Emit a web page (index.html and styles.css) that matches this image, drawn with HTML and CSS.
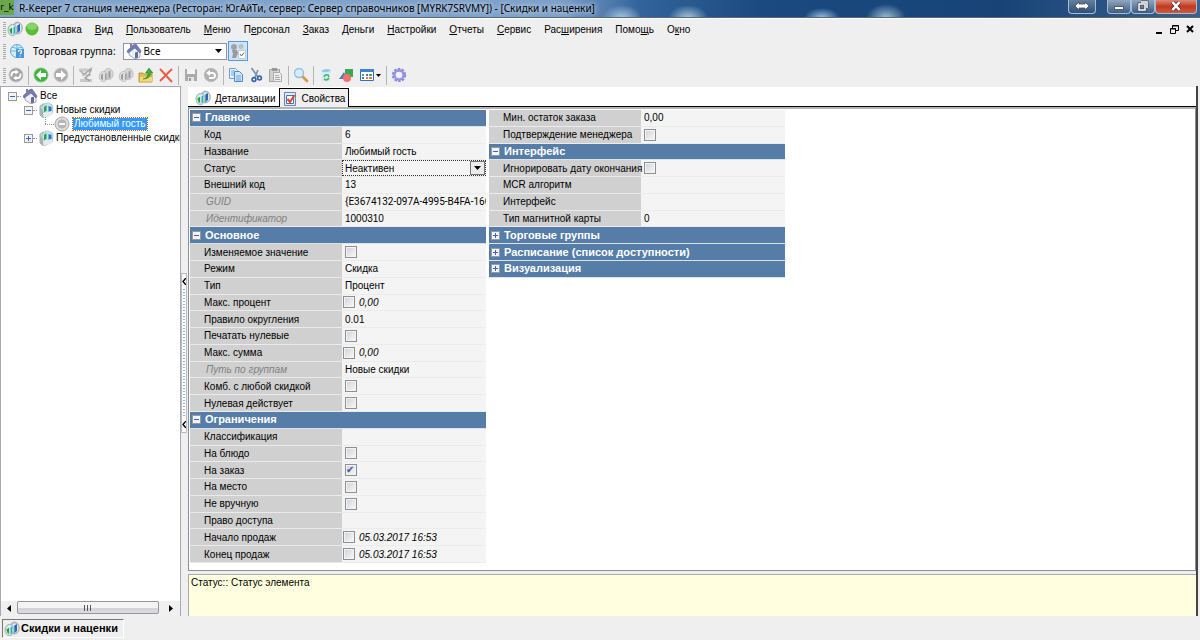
FILE: index.html
```
<!DOCTYPE html>
<html lang="ru">
<head>
<meta charset="utf-8">
<title>R-Keeper 7 станция менеджера</title>
<link rel="stylesheet" href="styles.css">
</head>
<body>
<svg class="defs" aria-hidden="true">
  <symbol id="coins" viewBox="0 0 16 16"><ellipse cx="10.500" cy="7" rx="4.800" ry="6" fill="#b9c4cc" stroke="#8f9aa5" stroke-width=".7"/><ellipse cx="11" cy="7" rx="3.300" ry="4.600" fill="#dcebf5"/><path d="M10.300 4.500l2.700-1.500v7l-2.700 2z" fill="#2468b6"/><ellipse cx="5.500" cy="9" rx="4.600" ry="5.700" fill="#c6d2d2" stroke="#95a3a3" stroke-width=".7"/><ellipse cx="5.800" cy="9" rx="3.400" ry="4.600" fill="#dff3ee"/><path d="M2.500 8.500l2.600-2v6.500L3.500 12z" fill="#1ea53a"/><path d="M6.500 6.500l1.900-1.500v7l-1.900 1.500z" fill="#2fa9c4"/></symbol>
  <symbol id="graycoins" viewBox="0 0 16 16"><ellipse cx="10.500" cy="7" rx="4.600" ry="5.500" fill="#d9d9d9" stroke="#b5b5b5" stroke-width=".8"/><path d="M10.500 4.500l2-1v7l-2 1z" fill="#9c9c9c"/><ellipse cx="5.500" cy="9.500" rx="4.300" ry="5" fill="#dedede" stroke="#b5b5b5" stroke-width=".8"/><path d="M3 8l2-1.500V13l-2-1zM7 7l1.500-1v6L7 13z" fill="#9c9c9c"/></symbol>
  <symbol id="house" viewBox="0 0 16 16"><path d="M3 8l5-5 6 6v5l-5 2-6-4z" fill="#eceff6" stroke="#9296ac" stroke-width=".8"/><path d="M1 8l6-6 3-1 5 7-1 2-5-5-7 5z" fill="#737bb4" stroke="#555d91" stroke-width=".6"/><path d="M9 9.500l3-1v6l-3 1z" fill="#666b92"/><path d="M4 1h2v3L4 6z" fill="#7a80a8"/></symbol>
  <symbol id="folder" viewBox="0 0 16 16"><path d="M2 4l3-2 9 1v9l-8 4-4-3z" fill="#cdd6da" stroke="#929b9f" stroke-width=".8"/><circle cx="9.500" cy="6.500" r="5.500" fill="#c4e4ee" stroke="#8ba9b5" stroke-width=".5"/><path d="M6 5l2.500-2v6L6 10z" fill="#23a348"/><path d="M10.500 4l3 1v4l-3 1z" fill="#2878bc"/><path d="M2 5l3 4v7l-3-3z" fill="#aab3b8"/><path d="M5 11l9-2v4l-8 3z" fill="#e6eaeb"/></symbol>
  <symbol id="arrow" viewBox="0 0 16 16"><path d="M8 3L3 8l5 5v-3h5V6H8z" fill="#fff"/></symbol>
</svg>

<header class="titlebar">
  <span class="logo">r_k</span>
  <h1>R-Keeper 7 станция менеджера (Ресторан: ЮгАйТи, сервер: Сервер справочников [MYRK7SRVMY]) - [Скидки и наценки]</h1>
  <div class="winbtns">
    <button class="wb swap" aria-label="Переключить"><svg width="16" height="10" viewBox="0 0 16 10"><path d="M1 5l4-4v2h6V1l4 4-4 4V7H5v2z" fill="#fff" stroke="#445" stroke-width=".8"/></svg></button>
    <div class="group">
      <button class="wb" aria-label="Свернуть"><svg width="12" height="10" viewBox="0 0 12 10"><path d="M1.500 5.500h9v3h-9z" fill="#fff" stroke="#556"/></svg></button>
      <button class="wb" aria-label="Развернуть"><svg width="12" height="12" viewBox="0 0 12 12"><path d="M4 2h6v6M2 4h6v6H2z" fill="none" stroke="#445" stroke-width="3"/><path d="M4 2h6v6M2 4h6v6H2z" fill="none" stroke="#fff" stroke-width="1.500"/></svg></button>
      <button class="wb close" aria-label="Закрыть"><svg width="12" height="10" viewBox="0 0 12 10"><path d="M2.500 1l7 8M9.500 1l-7 8" stroke="#534" stroke-width="4"/><path d="M2.500 1l7 8M9.500 1l-7 8" stroke="#fff" stroke-width="2.500"/></svg></button>
    </div>
  </div>
</header>

<nav class="menubar">
  <i class="grip"></i>
  <svg class="ico"><use href="#coins"/></svg>
  <svg class="ico" viewBox="0 0 16 16"><circle cx="8" cy="8" r="6.500" fill="#59bd37"/><ellipse cx="8" cy="5.500" rx="5" ry="3.500" fill="#86d468"/></svg>
  <div class="menus">
    <button><u>П</u>равка</button><button><u>В</u>ид</button><button><u>П</u>ользователь</button><button><u>М</u>еню</button><button>П<u>е</u>рсонал</button><button><u>З</u>аказ</button><button><u>Д</u>еньги</button><button><u>Н</u>астройки</button><button><u>О</u>тчеты</button><button><u>С</u>ервис</button><button>Рас<u>ш</u>ирения</button><button>Помо<u>щ</u>ь</button><button>О<u>к</u>но</button>
  </div>
  <div class="mdi">
    <button aria-label="Свернуть окно"><svg width="8" height="9" viewBox="0 0 8 9"><path d="M1 7h6v2H1z"/></svg></button>
    <button aria-label="Восстановить окно"><svg width="9" height="9" viewBox="0 0 9 9"><path d="M2.500 3V.500h6v5H6M2 1h7M.500 3.500h5v5h-5zM0 4h6" fill="none" stroke="#000"/></svg></button>
    <button aria-label="Закрыть окно"><svg width="8" height="8" viewBox="0 0 8 8"><path d="M1 1l6 6M7 1L1 7" stroke="#000" stroke-width="2"/></svg></button>
  </div>
</nav>

<div class="tradebar">
  <i class="grip"></i>
  <svg class="ico" viewBox="0 0 16 16"><circle cx="8" cy="8" r="6.500" fill="#d5edf9" stroke="#5ba7dd"/><path d="M8 1v14M1 8h14M3 4q5 3 10 0" fill="none" stroke="#6db5e2"/><path d="M7 6h8v9H7z" fill="#4a98d7"/><path d="M9.500 9q0-2 1.500-2t1.500 1.500T11 11M11 12.500v1" fill="none" stroke="#fff" stroke-width="1.200"/></svg>
  <label for="group">Торговая группа:</label>
  <div class="combo"><svg class="ico"><use href="#house"/></svg><select id="group"><option>Все</option></select><svg class="caret" width="7" height="4" viewBox="0 0 7 4"><path d="M0 0h7L3.500 4z"/></svg></div>
  <button class="toggle" aria-label="Фильтр"><svg width="16" height="16" viewBox="0 0 16 16"><circle cx="4" cy="4" r="3" fill="#9ea2a5"/><circle cx="11" cy="3.500" r="2.500" fill="#bbbfc2"/><path d="M2 7h5l1 3-2 5H2l1-4z" fill="#979b9e"/><path d="M8.500 7.500h7v8h-7z" fill="#fff" stroke="#c3c8cb"/><path d="M10 11l1.500 2L14 9.500" fill="none" stroke="#666"/></svg></button>
</div>

<div class="toolbar">
  <i class="grip"></i>
  <button aria-label="Обновить"><svg class="ico" viewBox="0 0 16 16"><circle cx="8" cy="8" r="7" fill="#a3a3a3" stroke="#c4c4c4" stroke-width=".8"/><path d="M3.500 9.500V8q0-3 3-3H8M12.500 6.500V8q0 3-3 3H8" fill="none" stroke="#fff" stroke-width="1.800"/><path d="M7.500 2.500l3.500 2.500-3.500 2.500zM8.500 8.500L5 11l3.500 2.500z" fill="#fff"/></svg></button>
  <i class="sep"></i>
  <button aria-label="Назад"><svg class="ico" viewBox="0 0 16 16"><circle cx="8" cy="8" r="7" fill="#3fb53c" stroke="#7cc47a"/><use href="#arrow"/></svg></button>
  <button aria-label="Вперёд"><svg class="ico" viewBox="0 0 16 16"><circle cx="8" cy="8" r="7" fill="#adadad" stroke="#c8c8c8"/><path d="M8 3l5 5-5 5v-3H3V6h5z" fill="#fff"/></svg></button>
  <i class="sep"></i>
  <button aria-label="Дерево"><svg class="ico" viewBox="0 0 16 16"><path d="M1 1.500h13v3H1zM4 7h9v2H4zM2 12h12v3H2z" fill="#c9c9c9"/><path d="M3 4q2 5 6 1l4-3-2 6-4 3 5 3" fill="none" stroke="#a5a5a5" stroke-width="1.500"/></svg></button>
  <button aria-label="Элемент"><svg class="ico"><use href="#graycoins"/></svg></button>
  <button aria-label="Копия элемента"><svg class="ico"><use href="#graycoins"/></svg></button>
  <button aria-label="Вверх"><svg class="ico" viewBox="0 0 16 16"><path d="M1 6h4l1 1h8v8H1z" fill="#e4bd4e" stroke="#b38c2b" stroke-width=".8"/><path d="M2 10h12v4.500H2z" fill="#f4d97b"/><path d="M5 12q5-1 5-6H7.500L11 1l4 5h-2.500q0 6-7.500 6z" fill="#3ead3b" stroke="#277e27" stroke-width=".5"/></svg></button>
  <button aria-label="Удалить"><svg class="ico" viewBox="0 0 16 16"><path d="M2 2l12 13M14 2L2 14" stroke="#ee5941" stroke-width="1.900"/></svg></button>
  <i class="sep"></i>
  <button aria-label="Сохранить"><svg class="ico" viewBox="0 0 16 16"><path d="M2 2h11l1 1v11H2z" fill="#aaa"/><path d="M4 2h8v5H4z" fill="#f4f4f4"/><path d="M5 10h6v4H5z" fill="#e3e3e3"/><path d="M6 11h2v3H6z" fill="#999"/></svg></button>
  <button aria-label="Отменить"><svg class="ico" viewBox="0 0 16 16"><circle cx="8" cy="8" r="7" fill="#b1b1b1"/><path d="M6 6h3q3 0 3 2.500T9 11H6" fill="none" stroke="#fff" stroke-width="2"/><path d="M3 6l4-3v6z" fill="#fff"/></svg></button>
  <i class="sep"></i>
  <button aria-label="Копировать"><svg class="ico" viewBox="0 0 16 16"><path d="M1.500 1.500h6l2 2v8h-8z" fill="#e9f3fc" stroke="#6aa0d8"/><path d="M6.500 4.500h5l3 3v7h-8z" fill="#d4e7f9" stroke="#4b8cce"/><path d="M3 4h4M3 6h3M3 8h3M8 9h5M8 11h5M8 13h5" stroke="#6ba3db"/></svg></button>
  <button aria-label="Вырезать"><svg class="ico" viewBox="0 0 16 16"><path d="M3.500 1l6.500 9M10 3l-3 7" stroke="#7b93b5" stroke-width="1.700"/><circle cx="6" cy="12.500" r="1.900" fill="none" stroke="#3865aa" stroke-width="1.600"/><circle cx="11.500" cy="11" r="1.900" fill="none" stroke="#3865aa" stroke-width="1.600"/></svg></button>
  <button aria-label="Вставить"><svg class="ico" viewBox="0 0 16 16"><path d="M1.500 2.500h10v12h-10z" fill="#d0d0d0" stroke="#a2a2a2"/><path d="M4 1h5v3H4z" fill="#999"/><path d="M5.500 5.500h6l2 2v7h-8z" fill="#eee" stroke="#aaa"/><path d="M7 8.500h4M7 10.500h5M7 12.500h5" stroke="#aaa"/></svg></button>
  <i class="sep"></i>
  <button aria-label="Найти"><svg class="ico" viewBox="0 0 16 16"><path d="M9.500 9.500L14 14" stroke="#d89a45" stroke-width="2.800" stroke-linecap="round"/><circle cx="6" cy="6" r="4.500" fill="#d7ecfb" stroke="#91bde2" stroke-width="1.300"/></svg></button>
  <i class="sep"></i>
  <button aria-label="Корзина"><svg class="ico" viewBox="0 0 16 16"><path d="M3 4l10-1-1 11-8 1z" fill="#d3ecf7"/><path d="M3 4q5-3.500 10-1-4 4-10 1" fill="#8fcbec"/><path d="M6 10q1-3 4-2l1 2M11 11q-2 3-5 1" fill="none" stroke="#4bb760" stroke-width="1.600"/></svg></button>
  <button aria-label="Фигуры"><svg class="ico" viewBox="0 0 16 16"><path d="M7 2h8v8H7z" fill="#39a852"/><path d="M1 12L6 5l3 7z" fill="#4d78bb"/><circle cx="9" cy="11" r="4" fill="#f47168"/></svg></button>
  <button class="wide" aria-label="Вид"><svg class="ico" viewBox="0 0 16 16"><path d="M1.500 2.500h13v11h-13z" fill="#fff" stroke="#2f70c4"/><path d="M1 2h14v3H1z" fill="#3c83d7"/><path d="M3 7h2v2H3zM10 7h3v2h-3z" fill="#4fa84e"/><path d="M7 7h2v2H7zM3 10h2v2H3z" fill="#4675bf"/><path d="M7 10h2v2H7zM10 10h3v2h-3z" fill="#e17c4b"/></svg><svg width="5" height="3" viewBox="0 0 5 3"><path d="M0 0h5L2.500 3z"/></svg></button>
  <i class="sep"></i>
  <button aria-label="Настройки"><svg class="ico" viewBox="0 0 16 16"><circle cx="8" cy="8" r="6" fill="none" stroke="#8587d8" stroke-width="2.200" stroke-dasharray="2.500 1.270"/><circle cx="8" cy="8" r="4.500" fill="#f2f2fb" stroke="#9395e4" stroke-width="2.400"/></svg></button>
</div>

<main class="work">
  <aside class="side">
    <ul class="tree">
      <li><i class="pm minus"></i><i class="dots"></i><svg class="ico"><use href="#house"/></svg><span>Все</span></li>
      <li class="l2"><i class="pm minus"></i><i class="dots"></i><svg class="ico"><use href="#folder"/></svg><span>Новые скидки</span></li>
      <li class="l3"><i class="elbow"></i><svg class="ico" viewBox="0 0 16 16"><circle cx="8" cy="8" r="7" fill="#ddd" stroke="#aaa"/><circle cx="8" cy="8" r="4.500" fill="#b5b5b5"/><path d="M5 8h6" stroke="#fff" stroke-width="1.800"/></svg><span class="sel">Любимый гость</span></li>
      <li class="l2"><i class="pm plus"></i><i class="dots"></i><svg class="ico"><use href="#folder"/></svg><span>Предустановленные скидки</span></li>
    </ul>
    <div class="scroll">
      <button aria-label="Влево"><svg width="4" height="7" viewBox="0 0 4 7"><path d="M4 0v7L0 3.500z"/></svg></button>
      <div class="thumb"><i></i><i></i><i></i></div>
      <button aria-label="Вправо"><svg width="4" height="7" viewBox="0 0 4 7"><path d="M0 0v7l4-3.500z"/></svg></button>
    </div>
  </aside>
  <div class="split"><button class="handle" aria-label="Свернуть панель"><svg width="4" height="7" viewBox="0 0 4 7"><path d="M4 0L1 3.500 4 7" fill="none" stroke="#000" stroke-width="1.400"/></svg><i></i><svg width="4" height="7" viewBox="0 0 4 7"><path d="M4 0L1 3.500 4 7" fill="none" stroke="#000" stroke-width="1.400"/></svg></button></div>
  <section class="content">
    <div class="tabs">
      <button class="tab"><svg class="ico"><use href="#coins"/></svg>Детализации</button>
      <button class="tab active"><svg class="ico" viewBox="0 0 16 16"><path d="M2.500 1.500h11v13h-11z" fill="#e3edf9" stroke="#6386bb"/><path d="M4.500 4.500h7v8h-7z" fill="#fff" stroke="#4571b1"/><path d="M5.500 8l2.500 3L12.500 4" fill="none" stroke="#e24625" stroke-width="2"/></svg>Свойства</button>
    </div>
    <div class="props">
      <div class="col">
        <button class="head"><i class="pm minus"></i>Главное</button>
        <div class="row"><label for="p1">Код</label><div class="val"><input id="p1" type="text" value="6"></div></div>
        <div class="row"><label for="p2">Название</label><div class="val"><input id="p2" type="text" value="Любимый гость"></div></div>
        <div class="row"><label for="p3">Статус</label><div class="val status"><select id="p3"><option>Неактивен</option></select><span class="drop"><svg width="7" height="4" viewBox="0 0 7 4"><path d="M0 0h7L3.500 4z"/></svg></span></div></div>
        <div class="row"><label for="p4">Внешний код</label><div class="val"><input id="p4" type="text" value="13"></div></div>
        <div class="row ro"><label for="p5">GUID</label><div class="val"><input id="p5" class="guid" type="text" readonly value="{E3674132-097A-4995-B4FA-16C"></div></div>
        <div class="row ro"><label for="p6">Идентификатор</label><div class="val"><input id="p6" type="text" readonly value="1000310"></div></div>
        <button class="head"><i class="pm minus"></i>Основное</button>
        <div class="row"><label for="p7">Изменяемое значение</label><div class="val"><input id="p7" type="checkbox"></div></div>
        <div class="row"><label for="p8">Режим</label><div class="val"><input id="p8" type="text" value="Скидка"></div></div>
        <div class="row"><label for="p9">Тип</label><div class="val"><input id="p9" type="text" value="Процент"></div></div>
        <div class="row"><label for="p10">Макс. процент</label><div class="val opt"><input id="p10" type="checkbox"><input type="text" aria-label="Макс. процент, значение" value="0,00"></div></div>
        <div class="row"><label for="p11">Правило округления</label><div class="val"><input id="p11" type="text" value="0.01"></div></div>
        <div class="row"><label for="p12">Печатать нулевые</label><div class="val"><input id="p12" type="checkbox"></div></div>
        <div class="row"><label for="p13">Макс. сумма</label><div class="val opt"><input id="p13" type="checkbox"><input type="text" aria-label="Макс. сумма, значение" value="0,00"></div></div>
        <div class="row ro"><label for="p14">Путь по группам</label><div class="val"><input id="p14" type="text" readonly value="Новые скидки"></div></div>
        <div class="row"><label for="p15">Комб. с любой скидкой</label><div class="val"><input id="p15" type="checkbox"></div></div>
        <div class="row"><label for="p16">Нулевая действует</label><div class="val"><input id="p16" type="checkbox"></div></div>
        <button class="head"><i class="pm minus"></i>Ограничения</button>
        <div class="row"><label for="p17">Классификация</label><div class="val"><input id="p17" type="text"></div></div>
        <div class="row"><label for="p18">На блюдо</label><div class="val"><input id="p18" type="checkbox"></div></div>
        <div class="row"><label for="p19">На заказ</label><div class="val"><input id="p19" type="checkbox" checked></div></div>
        <div class="row"><label for="p20">На место</label><div class="val"><input id="p20" type="checkbox"></div></div>
        <div class="row"><label for="p21">Не вручную</label><div class="val"><input id="p21" type="checkbox"></div></div>
        <div class="row"><label for="p22">Право доступа</label><div class="val"><input id="p22" type="text"></div></div>
        <div class="row"><label for="p23">Начало продаж</label><div class="val opt"><input id="p23" type="checkbox"><input type="text" aria-label="Начало продаж, дата" value="05.03.2017 16:53"></div></div>
        <div class="row"><label for="p24">Конец продаж</label><div class="val opt"><input id="p24" type="checkbox"><input type="text" aria-label="Конец продаж, дата" value="05.03.2017 16:53"></div></div>
      </div>
      <div class="col">
        <div class="row"><label for="q1">Мин. остаток заказа</label><div class="val"><input id="q1" type="text" value="0,00"></div></div>
        <div class="row"><label for="q2">Подтверждение менеджера</label><div class="val"><input id="q2" type="checkbox"></div></div>
        <button class="head"><i class="pm minus"></i>Интерфейс</button>
        <div class="row"><label for="q3">Игнорировать дату окончания</label><div class="val"><input id="q3" type="checkbox"></div></div>
        <div class="row"><label for="q4">MCR алгоритм</label><div class="val"><input id="q4" type="text"></div></div>
        <div class="row"><label for="q5">Интерфейс</label><div class="val"><input id="q5" type="text"></div></div>
        <div class="row"><label for="q6">Тип магнитной карты</label><div class="val"><input id="q6" type="text" value="0"></div></div>
        <button class="head"><i class="pm plus"></i>Торговые группы</button>
        <button class="head"><i class="pm plus"></i>Расписание (список доступности)</button>
        <button class="head"><i class="pm plus"></i>Визуализация</button>
      </div>
    </div>
    <p class="hint">Статус:: Статус элемента</p>
  </section>
</main>

<footer class="taskbar"><button><svg class="ico"><use href="#coins"/></svg>Скидки и наценки</button></footer>
</body>
</html>
```
FILE: styles.css
```
* { box-sizing: border-box; }
body {
  margin: 0; height: 100vh; display: flex; flex-direction: column; overflow: hidden;
  background: #efefef; color: #000;
  font: 10px/13px "Liberation Sans", Arial, sans-serif;
}
button, input, select { font: inherit; color: inherit; margin: 0; padding: 0; border: 0; background: none; border-radius: 0; appearance: none; outline: 0; }
.defs { position: absolute; width: 0; height: 0; }
.ico { width: 16px; height: 16px; flex: none; display: block; }

.titlebar {
  display: flex; align-items: flex-start; flex: none; height: 18px; gap: 5px; border-bottom: 1px solid #56677c;
  box-shadow: 0 1px #fff;
  background:
    radial-gradient(ellipse 20px 13px at 622px 18px, #a8c6e0, transparent),
    radial-gradient(ellipse 20px 13px at 688px 18px, #a8c6d8, transparent),
    radial-gradient(ellipse 18px 10px at 822px 18px, #9fc0e8, transparent),
    radial-gradient(ellipse 20px 14px at 886px 18px, #a0c0d2, transparent),
    linear-gradient(90deg, #83a5cc 0, #7d9fc8 560px, #33639b 640px, #1b4a80 760px, #174377 1000px, #3b628c 1200px);
}
.logo { width: 14px; height: 15px; background: #6aa84f; font: 9px/15px "DejaVu Sans", sans-serif; text-align: center; white-space: nowrap; overflow: hidden; }
h1 { margin: 0; flex: 1; font: 10px/16px "Noto Sans", sans-serif; white-space: nowrap; text-shadow: 0 0 4px #c6d8ee, 0 0 6px #c6d8ee; }
.winbtns { display: flex; gap: 11px; padding-right: 3px; }
.group { display: flex; }
.wb { height: 14px; width: 24px; display: flex; align-items: center; justify-content: center; border: 1px solid #a8bdd2; border-top: 0; border-radius: 0 0 4px 4px; background: linear-gradient(#8fa5bd, #3c5f86); padding-bottom: 2px; }
.wb.swap { width: 28px; background: linear-gradient(#64809e, #2d5179); }
.wb.close { width: 42px; background: linear-gradient(#d98a78, #c23a20 50%, #cf5a3c); }

.grip { width: 3px; height: 15px; flex: none; background: repeating-linear-gradient(#aaa 0 1px, #efefef 1px 2px); }
.menubar { display: flex; align-items: center; flex: none; height: 22px; padding: 0 3px; }
.menubar .ico { margin-left: 1px; }
.menus { display: flex; gap: 13px; padding-left: 8px; flex: 1; }
.mdi { display: flex; gap: 7px; padding-right: 3px; align-items: center; }
.mdi button, .mdi svg { display: block; }

.tradebar { display: flex; align-items: center; flex: none; height: 22px; padding-left: 3px; }
.tradebar > .ico { margin: 0 8px 0 3px; }
.tradebar label { font: 10px/16px "Noto Sans", sans-serif; }
.combo { position: relative; display: flex; align-items: center; width: 104px; height: 17px; margin-left: 7px; padding-left: 2px; background: #fff; border: 1px solid #8f939b; }
.combo select { flex: 1; padding-left: 2px; font: 10px/15px "Noto Sans", sans-serif; }
.caret { position: absolute; right: 4px; pointer-events: none; }
.toggle { width: 20px; height: 20px; margin-left: 1px; display: flex; align-items: center; justify-content: center; background: #cfe3f7; border: 1px solid #4f9be5; }

.toolbar { display: flex; align-items: center; flex: none; height: 24px; padding: 2px 0 0 3px; }
.toolbar button { width: 20px; display: flex; align-items: center; justify-content: center; gap: 1px; }
.toolbar .wide { width: 28px; }
.sep { width: 1px; height: 19px; margin: 0 2px; background: #b5b5b5; }

.work { display: flex; flex: 1; min-height: 0; padding-right: 2px; }
.side { width: 181px; flex: none; display: flex; flex-direction: column; justify-content: space-between; background: #fff; border: solid #a8a8b4; border-width: 1px 1px 0 1px; overflow: hidden; }
.tree { list-style: none; margin: 0; padding: 2px 0 0 7px; }
.tree li { display: flex; align-items: center; height: 14px; white-space: nowrap; }
.tree .ico { margin: 0 1px; }
.tree span { padding: 0 1px; line-height: 12px; }
.tree .l2 { padding-left: 16px; }
.tree .l3 { padding-left: 37px; }
.tree .sel { background: #3399ff; color: #fff; outline: 1px dotted #c60; }
.tree .l3 .ico { margin: 0 3px 0 0; }
.pm { display: block; flex: none; width: 9px; height: 9px; border: 1px solid #999; background: linear-gradient(#36c, #36c) center / 5px 1px no-repeat, #f4f4f4; }
.pm.plus { background: linear-gradient(#36c, #36c) center / 5px 1px no-repeat, linear-gradient(#36c, #36c) center / 1px 5px no-repeat, #f4f4f4; }
.dots { width: 4px; flex: none; border-top: 1px dotted #999; }
.elbow { width: 9px; height: 14px; background: repeating-linear-gradient(90deg, #999 0 1px, transparent 1px 2px) 0 7px / 9px 1px no-repeat, repeating-linear-gradient(#999 0 1px, transparent 1px 2px) 0 0 / 1px 7px no-repeat; }
.scroll { display: flex; height: 15px; background: #f0f0f0; }
.scroll button { width: 16px; display: flex; align-items: center; justify-content: center; }
.thumb { width: 142px; height: 13px; margin-right: 4px; display: flex; justify-content: center; align-items: center; gap: 1px; border: 1px solid #979797; border-radius: 2px; background: linear-gradient(#f4f4f4 50%, #d3d3d8 50%, #dcdce0); }
.thumb i { width: 2px; height: 6px; border-left: 1px solid #555; }

.split { width: 7px; flex: none; padding-top: 187px; }
.handle { width: 6px; height: 160px; display: flex; flex-direction: column; align-items: center; justify-content: space-between; padding: 4px 0; background: #fafafa; border: 1px solid #bbb; }
.handle i { flex: 1; width: 2px; margin: 4px 0; background: repeating-linear-gradient(#8ab8ee 0 1px, #fff 1px 3px); }

.content { flex: 1; min-width: 0; display: flex; flex-direction: column; border-right: 2px solid #444; }
.tabs { display: flex; align-items: flex-end; flex: none; height: 21px; background: #fff; border-top: 1px solid #efefef; box-shadow: inset 0 -1px #000; }
.tab { display: flex; align-items: center; height: 19px; padding: 1px 3px 0 7px; gap: 4px; }
.tab.active { border: 1px solid #000; border-bottom: 0; padding-left: 2px; background: #efefef; }
.props { flex: 1; min-height: 0; display: flex; gap: 3px; padding: 1px 0 7px 1px; background: #fff; border: solid #8c8f98; border-top: 2px solid #b4b4b9; border-width: 2px 1px 1px 1px; }
.col { width: 296px; display: grid; grid-template-rows: repeat(27, minmax(0, 1fr)); }
.row { display: flex; min-height: 0; background: #f4f4f4; border-bottom: 1px solid #ebebeb; }
.row label { width: 152px; flex: none; padding-left: 14px; background: #d0d0d0; display: flex; align-items: center; white-space: nowrap; }
.row.ro label { color: #808080; font-style: italic; padding-left: 16px; }
.val { flex: 1; min-width: 0; display: flex; align-items: center; padding-left: 3px; }
.val input[type="text"] { width: 100%; min-width: 0; height: 13px; }
.val .guid { font-family: Roboto, sans-serif; }
.val input[type="checkbox"] { width: 12px; height: 12px; flex: none; border: 1px solid #8e8f8f; box-shadow: inset 0 0 0 1px #f4f4f4; background: linear-gradient(135deg, #ccd0d8, #fafafa); }
.val input:checked::before { content: "✔"; display: block; font: 10px/10px "DejaVu Sans", sans-serif; color: #3a56a5; }
.val.opt { padding-left: 1px; gap: 4px; font-style: italic; }
.status { position: relative; outline: 1px dotted #333; outline-offset: -1px; }
.status select { flex: 1; }
.drop { position: absolute; right: 1px; top: 1px; bottom: 1px; width: 15px; display: flex; align-items: center; justify-content: center; background: #ececec; border: 1px solid #777; pointer-events: none; }
.head { display: flex; align-items: center; gap: 4px; padding-left: 2px; background: #567da8; color: #fff; font-size: 11px; font-weight: bold; white-space: nowrap; border-bottom: 1px solid #dbe2ea; }
.hint { flex: none; height: 42px; margin: 3px 0 0; padding: 1px 2px; background: #ffffdf; border: solid #aaa; border-width: 1px 0 0 1px; }

.taskbar { flex: none; height: 24px; padding: 3px 2px; }
.taskbar button { display: flex; align-items: center; gap: 1px; width: 122px; height: 19px; padding-left: 1px; font-size: 11px; font-weight: bold; white-space: nowrap; border: 1px solid; border-color: #777 #fff #fff #777; }
```
